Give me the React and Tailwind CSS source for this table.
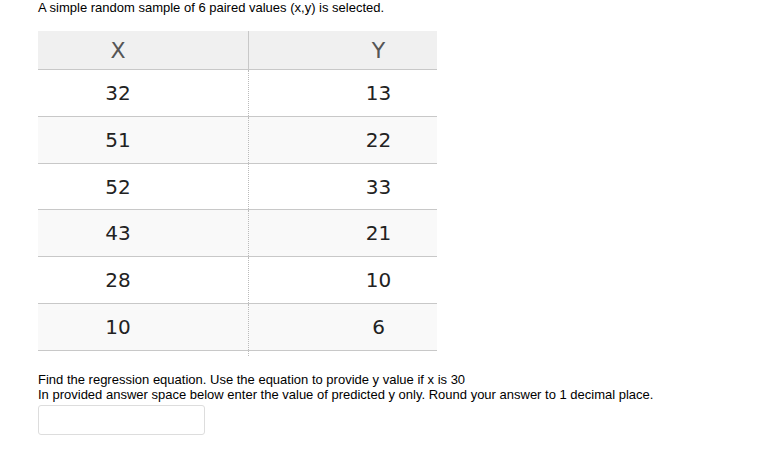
import React from "react";

const rows = [
  ["32", "13", "h-[47px]"],
  ["51", "22", "h-[47px]"],
  ["52", "33", "h-[46px]"],
  ["43", "21", "h-[47px]"],
  ["28", "10", "h-[47px]"],
  ["10", "6", "h-[47px]"],
];

const App = () => {
  return (
    <div className="w-[767px] h-[454px] bg-white pl-[38px] font-['Liberation_Sans',Arial,sans-serif] text-[13px] text-black">
      <p className="leading-[15px]">A simple random sample of 6 paired values (x,y) is selected.</p>

      {/* Table */}
      <div className="mt-[16px] w-[399px] font-['DejaVu_Sans',Verdana,sans-serif]">
        <div className="flex h-[39px] bg-[#f0f0f0] border-b border-[#c8c8c8] text-[22px] text-[#555]">
          <div className="w-[211px] border-r border-[#c8c8c8] flex items-center">
            <span className="w-[160px] text-center">X</span>
          </div>
          <div className="flex-1 flex items-center pl-[71px]">
            <span className="flex-1 text-center">Y</span>
          </div>
        </div>
        {rows.map((r, i) => (
          <div
            key={i}
            className={`flex ${r[2]} border-b border-[#c8c8c8] text-[20px] text-[#222] ${i % 2 === 1 ? "bg-[#f9f9f9]" : "bg-white"}`}
          >
            <div className="w-[211px] border-r border-dotted border-[#bbb] flex items-center">
              <span className="w-[160px] text-center">{r[0]}</span>
            </div>
            <div className="flex-1 flex items-center pl-[71px]">
              <span className="flex-1 text-center">{r[1]}</span>
            </div>
          </div>
        ))}
        <div className="w-[211px] h-[5px] border-r border-dotted border-[#bbb]" />
      </div>

      <div className="mt-[16px] leading-[15px]">
        <p>Find the regression equation. Use the equation to provide y value if x is 30</p>
        <p>In provided answer space below enter the value of predicted y only. Round your answer to 1 decimal place.</p>
      </div>
      <input className="mt-[3px] w-[167px] h-[30px] border border-[#ddd] rounded-[3px] outline-none" />
    </div>
  );
};

export default App;
